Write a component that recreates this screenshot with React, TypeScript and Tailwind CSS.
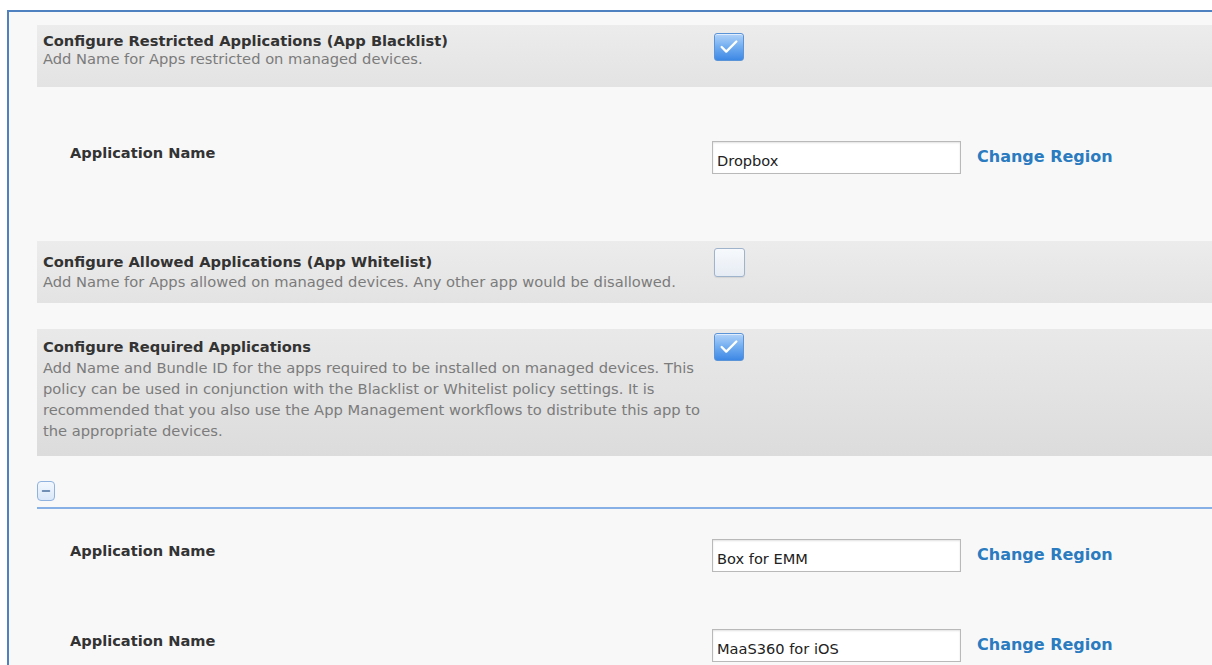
import { Check, Minus } from "lucide-react";

type SectionProps = {
  title: string;
  text: string;
  checked: boolean;
};

function PolicyCheckbox({ checked }: { checked: boolean }) {
  if (checked) {
    return (
      <span className="flex h-[28px] w-[30px] shrink-0 items-center justify-center rounded-[3px] border border-[#5b95d8] bg-linear-to-b from-[#b2d3f8] via-[#70acf0] to-[#3d88e5] shadow-[inset_0_1px_0_rgba(255,255,255,0.6)]">
        <Check className="h-[22px] w-[22px] text-white" strokeWidth={2.6} />
      </span>
    );
  }
  return (
    <span className="block h-[29px] w-[31px] shrink-0 rounded-[3px] border border-[#9fb3cb] bg-linear-to-b from-[#f7f9fc] to-[#e6ecf4] shadow-[0_1px_1px_rgba(0,0,0,0.08)]" />
  );
}

function AppNameRow({ value }: { value: string }) {
  return (
    <div className="flex items-start pl-[33px]">
      <span className="mt-[3px] w-[642px] shrink-0 text-[14.6px] font-bold leading-[18px] text-[#333]">
        Application Name
      </span>
      <input
        readOnly
        value={value}
        className="h-[33px] w-[249px] shrink-0 border border-[#b9b9b9] bg-white px-[4px] pt-[5px] text-[14.6px] text-[#222] shadow-[inset_0_1px_2px_rgba(0,0,0,0.12)] outline-none"
      />
      <a className="ml-[16px] mt-[6px] text-[16px] font-bold leading-[20px] text-[#2a7bbf]">
        Change Region
      </a>
    </div>
  );
}

export default function App() {
  const sections: Record<string, SectionProps> = {
    blacklist: {
      title: "Configure Restricted Applications (App Blacklist)",
      text: "Add Name for Apps restricted on managed devices.",
      checked: true,
    },
    whitelist: {
      title: "Configure Allowed Applications (App Whitelist)",
      text: "Add Name for Apps allowed on managed devices. Any other app would be disallowed.",
      checked: false,
    },
  };

  return (
    <div className="h-[665px] w-[1212px] overflow-hidden bg-white pl-[7px] pt-[10px] font-['DejaVu_Sans',Verdana,sans-serif]">
      <div className="h-full border-l-2 border-t-2 border-[#4f80c0] bg-[#f8f8f9] pl-[28px] pt-[13px]">
        {/* Blacklist */}
        <div className="flex h-[62px] bg-linear-to-b from-[#ececec] to-[#e3e3e3]">
          <div className="w-[677px] shrink-0 pl-[6px] pt-[7px] leading-[18px]">
            <div className="text-[14.7px] font-bold text-[#333]">{sections.blacklist.title}</div>
            <div className="text-[14.7px] text-[#7b7b7b]">{sections.blacklist.text}</div>
          </div>
          <div className="pt-[8px]">
            <PolicyCheckbox checked />
          </div>
        </div>

        <div className="pt-[54px]">
          <AppNameRow value="Dropbox" />
        </div>

        {/* Whitelist */}
        <div className="mt-[67px] flex h-[62px] bg-linear-to-b from-[#ececec] to-[#e3e3e3]">
          <div className="w-[677px] shrink-0 pl-[6px] pt-[11px] leading-[20px]">
            <div className="text-[14.7px] font-bold text-[#333]">{sections.whitelist.title}</div>
            <div className="text-[14.7px] text-[#7b7b7b]">{sections.whitelist.text}</div>
          </div>
          <div className="pt-[7px]">
            <PolicyCheckbox checked={false} />
          </div>
        </div>

        {/* Required apps */}
        <div className="mt-[26px] flex h-[127px] bg-linear-to-b from-[#e9e9e9] to-[#dcdcdc]">
          <div className="w-[677px] shrink-0 pl-[6px] pt-[7px] leading-[21px]">
            <div className="text-[14.7px] font-bold text-[#333]">Configure Required Applications</div>
            <div className="text-[14.7px] text-[#7b7b7b]">
              Add Name and Bundle ID for the apps required to be installed on managed devices. This
              policy can be used in conjunction with the Blacklist or Whitelist policy settings. It is
              recommended that you also use the App Management workflows to distribute this app to
              the appropriate devices.
            </div>
          </div>
          <div className="pt-[4px]">
            <PolicyCheckbox checked />
          </div>
        </div>

        {/* Collapse toggle and divider */}
        <div className="mt-[25px]">
          <button className="flex h-[20px] w-[18px] items-center justify-center rounded-[4px] border border-[#8fb2de] bg-linear-to-b from-[#f3f8fe] to-[#d9e7f8]">
            <Minus className="h-[12px] w-[12px] text-[#4a6f9c]" strokeWidth={3} />
          </button>
          <div className="mt-[6px] h-[2px] bg-[#86b0e6]" />
        </div>

        <div className="pt-[30px]">
          <AppNameRow value="Box for EMM" />
        </div>
        <div className="pt-[57px]">
          <AppNameRow value="MaaS360 for iOS" />
        </div>
      </div>
    </div>
  );
}
